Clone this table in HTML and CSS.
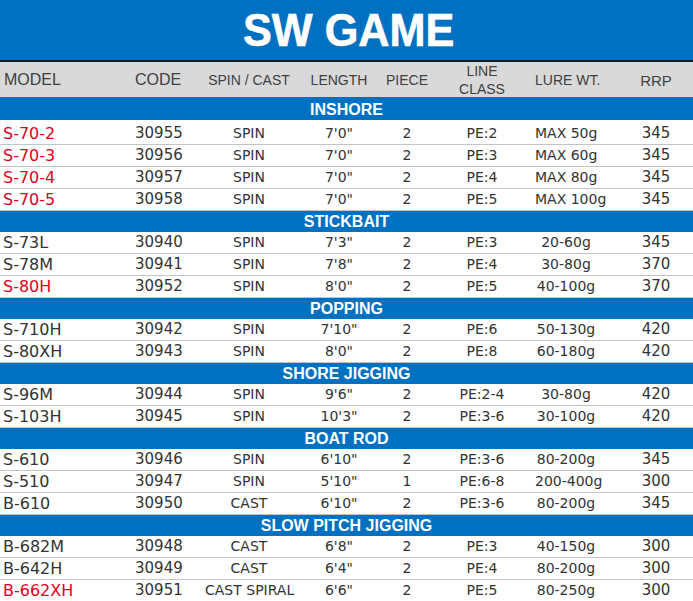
FILE: index.html
```html
<!DOCTYPE html>
<html>
<head>
<meta charset="utf-8">
<title>SW GAME</title>
<link rel="stylesheet" href="styles.css">
</head>
<body>
<div class="sheet">
  <div class="title"><span class="title-text">SW GAME</span></div>
  <div class="head">
    <div class="h-model">MODEL</div>
    <div class="h-code">CODE</div>
    <div class="h-c">SPIN / CAST</div>
    <div class="h-c">LENGTH</div>
    <div class="h-c">PIECE</div>
    <div class="h-c h-line">LINE<br>CLASS</div>
    <div class="h-c">LURE WT.</div>
    <div class="h-rrp">RRP</div>
  </div>

  <div class="bar lead">INSHORE</div>
  <div class="row first"><div class="m red">S-70-2</div><div class="code">30955</div><div class="c">SPIN</div><div class="c">7'0"</div><div class="c">2</div><div class="c">PE:2</div><div class="c">MAX 50g</div><div class="rrp">345</div></div>
  <div class="row"><div class="m red">S-70-3</div><div class="code">30956</div><div class="c">SPIN</div><div class="c">7'0"</div><div class="c">2</div><div class="c">PE:3</div><div class="c">MAX 60g</div><div class="rrp">345</div></div>
  <div class="row"><div class="m red">S-70-4</div><div class="code">30957</div><div class="c">SPIN</div><div class="c">7'0"</div><div class="c">2</div><div class="c">PE:4</div><div class="c">MAX 80g</div><div class="rrp">345</div></div>
  <div class="row"><div class="m red">S-70-5</div><div class="code">30958</div><div class="c">SPIN</div><div class="c">7'0"</div><div class="c">2</div><div class="c">PE:5</div><div class="c">MAX 100g</div><div class="rrp">345</div></div>

  <div class="bar">STICKBAIT</div>
  <div class="row"><div class="m">S-73L</div><div class="code">30940</div><div class="c">SPIN</div><div class="c">7'3"</div><div class="c">2</div><div class="c">PE:3</div><div class="c">20-60g</div><div class="rrp">345</div></div>
  <div class="row"><div class="m">S-78M</div><div class="code">30941</div><div class="c">SPIN</div><div class="c">7'8"</div><div class="c">2</div><div class="c">PE:4</div><div class="c">30-80g</div><div class="rrp">370</div></div>
  <div class="row"><div class="m red">S-80H</div><div class="code">30952</div><div class="c">SPIN</div><div class="c">8'0"</div><div class="c">2</div><div class="c">PE:5</div><div class="c">40-100g</div><div class="rrp">370</div></div>

  <div class="bar">POPPING</div>
  <div class="row"><div class="m">S-710H</div><div class="code">30942</div><div class="c">SPIN</div><div class="c">7'10"</div><div class="c">2</div><div class="c">PE:6</div><div class="c">50-130g</div><div class="rrp">420</div></div>
  <div class="row"><div class="m">S-80XH</div><div class="code">30943</div><div class="c">SPIN</div><div class="c">8'0"</div><div class="c">2</div><div class="c">PE:8</div><div class="c">60-180g</div><div class="rrp">420</div></div>

  <div class="bar">SHORE JIGGING</div>
  <div class="row"><div class="m">S-96M</div><div class="code">30944</div><div class="c">SPIN</div><div class="c">9'6"</div><div class="c">2</div><div class="c">PE:2-4</div><div class="c">30-80g</div><div class="rrp">420</div></div>
  <div class="row"><div class="m">S-103H</div><div class="code">30945</div><div class="c">SPIN</div><div class="c">10'3"</div><div class="c">2</div><div class="c">PE:3-6</div><div class="c">30-100g</div><div class="rrp">420</div></div>

  <div class="bar">BOAT ROD</div>
  <div class="row"><div class="m">S-610</div><div class="code">30946</div><div class="c">SPIN</div><div class="c">6'10"</div><div class="c">2</div><div class="c">PE:3-6</div><div class="c">80-200g</div><div class="rrp">345</div></div>
  <div class="row"><div class="m">S-510</div><div class="code">30947</div><div class="c">SPIN</div><div class="c">5'10"</div><div class="c">1</div><div class="c">PE:6-8</div><div class="c">200-400g</div><div class="rrp">300</div></div>
  <div class="row"><div class="m">B-610</div><div class="code">30950</div><div class="c">CAST</div><div class="c">6'10"</div><div class="c">2</div><div class="c">PE:3-6</div><div class="c">80-200g</div><div class="rrp">345</div></div>

  <div class="bar">SLOW PITCH JIGGING</div>
  <div class="row"><div class="m">B-682M</div><div class="code">30948</div><div class="c">CAST</div><div class="c">6'8"</div><div class="c">2</div><div class="c">PE:3</div><div class="c">40-150g</div><div class="rrp">300</div></div>
  <div class="row"><div class="m">B-642H</div><div class="code">30949</div><div class="c">CAST</div><div class="c">6'4"</div><div class="c">2</div><div class="c">PE:4</div><div class="c">80-200g</div><div class="rrp">300</div></div>
  <div class="row"><div class="m red">B-662XH</div><div class="code">30951</div><div class="c">CAST SPIRAL</div><div class="c">6'6"</div><div class="c">2</div><div class="c">PE:5</div><div class="c">80-250g</div><div class="rrp">300</div></div>
</div>
</body>
</html>
```

FILE: styles.css
```css
html, body {
  margin: 0;
  padding: 0;
  background: #ffffff;
}

.sheet {
  width: 693px;
  font-family: "DejaVu Sans", Verdana, sans-serif;
  color: #333333;
}

.title {
  height: 60px;
  background: #0070c0;
  border-bottom: 2px solid #1a1a1a;
  display: flex;
  justify-content: center;
  align-items: center;
}

.title-text {
  display: inline-block;
  font-family: "Liberation Sans", Arial, sans-serif;
  font-weight: bold;
  font-size: 47px;
  line-height: 60px;
  color: #ffffff;
  transform: scaleX(0.92);
  -webkit-text-stroke: 0.6px #ffffff;
  padding-left: 5px;
}

.head,
.row {
  display: grid;
  grid-template-columns: 130px 75px 88px 92px 44px 106px 62px 96px;
}

.head {
  height: 35px;
  background: #d9d9d9;
  align-items: center;
  font-family: "Liberation Sans", Arial, sans-serif;
  color: #404040;
  font-size: 14px;
}

.h-model {
  font-size: 16px;
  padding-left: 4px;
}

.h-code {
  font-size: 16px;
  padding-left: 5px;
}

.h-c {
  text-align: center;
  white-space: nowrap;
}

.h-line {
  line-height: 18px;
}

.h-rrp {
  font-size: 15px;
  text-align: center;
  padding-left: 22px;
}

.bar {
  height: 21px;
  line-height: 21px;
  background: #0070c0;
  color: #ffffff;
  font-family: "Liberation Sans", Arial, sans-serif;
  font-weight: bold;
  font-size: 16px;
  text-align: center;
}

.bar.lead {
  height: 23px;
  line-height: 25px;
}

.row {
  height: 22px;
  box-sizing: border-box;
  border-bottom: 1px solid #c4c4c4;
  line-height: 21px;
  font-size: 14px;
  white-space: nowrap;
}

.row.first {
  height: 25px;
  padding-top: 3px;
}

.m {
  font-size: 16px;
  padding-left: 3px;
}

.red {
  color: #e3001b;
}

.code {
  font-size: 15px;
  padding-left: 5px;
}

.c {
  text-align: center;
}

.rrp {
  font-size: 15px;
  text-align: center;
  padding-left: 22px;
}
```
